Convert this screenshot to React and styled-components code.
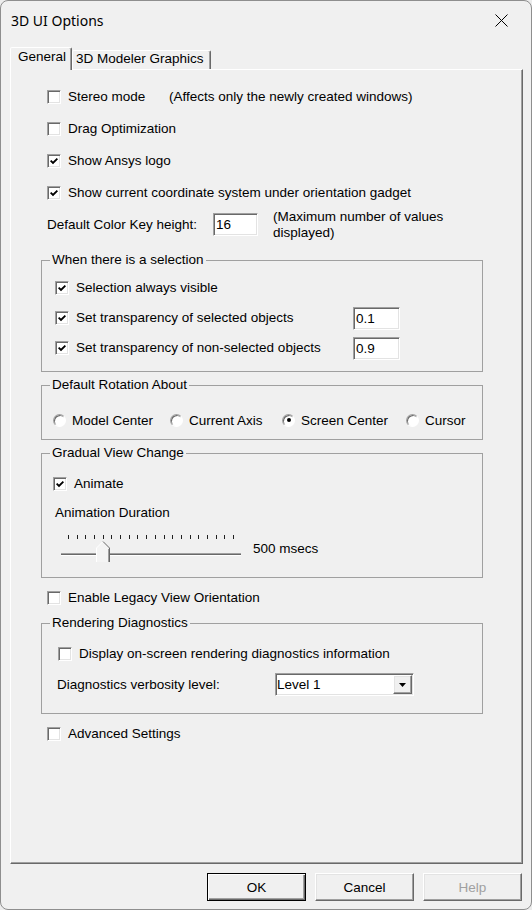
import React from "react";
import styled, { createGlobalStyle, css } from "styled-components";

const GlobalStyle = createGlobalStyle`
  html, body {
    margin: 0;
    padding: 0;
    background: #ececec;
  }
  body {
    font-family: "Liberation Sans", Arial, sans-serif;
    font-size: 13.5px;
    color: #000;
  }
  *, *::before, *::after {
    box-sizing: border-box;
  }
`;

// classic 3D edges
const sunken = css`
  border: 1px solid;
  border-color: #a0a0a0 #fff #fff #a0a0a0;
  box-shadow: inset 1px 1px 0 #696969, inset -1px -1px 0 #e3e3e3;
  background: #fff;
`;

const raised = css`
  border: 1px solid;
  border-color: #fff #696969 #696969 #fff;
  box-shadow: inset -1px -1px 0 #a0a0a0, inset 1px 1px 0 #e3e3e3;
  background: #f0f0f0;
`;

const Window = styled.div`
  width: 532px;
  height: 910px;
  display: flex;
  flex-direction: column;
  background: #f0f0f0;
  border: 1px solid #8e8e8e;
  border-radius: 8px;
  overflow: hidden;
`;

const TitleBar = styled.div`
  flex: none;
  height: 39px;
  display: flex;
  align-items: center;
  justify-content: space-between;
  padding: 0 23px 0 10px;
  font-family: "Noto Sans", "Open Sans", sans-serif;
  font-size: 14px;
`;

const TabStrip = styled.div`
  flex: none;
  height: 29px;
  display: flex;
  align-items: flex-end;
  padding-left: 9px;
`;

const Tab = styled.div`
  position: relative;
  z-index: 1;
  width: ${(p) => p.$w}px;
  height: ${(p) => (p.$active ? 23 : 19)}px;
  margin-bottom: ${(p) => (p.$active ? -1 : 0)}px;
  padding: 0 0 ${(p) => (p.$active ? 4 : 2)}px ${(p) => p.$pl}px;
  display: flex;
  align-items: center;
  line-height: 16px;
  white-space: nowrap;
  background: #f0f0f0;
  border: 1px solid;
  border-bottom: none;
  border-color: #fff #696969 transparent #fff;
  box-shadow: inset -1px 0 0 #a0a0a0;
  border-radius: 2px 2px 0 0;
`;

const Panel = styled.div`
  flex: none;
  height: 795px;
  margin: 0 8px 0 9px;
  padding: 11px 0 0 30px;
  display: flex;
  flex-direction: column;
  align-items: flex-start;
  border: 1px solid;
  border-color: #fff #696969 #696969 #fff;
  box-shadow: inset -1px -1px 0 #a0a0a0;
`;

const CheckRow = styled.div`
  flex: none;
  display: flex;
  align-items: center;
  gap: 7px;
  height: ${(p) => p.$h ?? 32}px;
  margin-top: ${(p) => p.$mt ?? 0}px;
  padding-left: ${(p) => p.$indent ?? 0}px;
`;

const Label = styled.span`
  flex: none;
  width: ${(p) => (p.$w ? `${p.$w}px` : "auto")};
  line-height: 16px;
  white-space: nowrap;
`;

const Box = styled.span`
  flex: none;
  width: 14px;
  height: 14px;
  display: flex;
  align-items: center;
  justify-content: center;
  ${sunken}
`;

const KeyRow = styled.div`
  flex: none;
  display: flex;
  align-items: flex-start;
  height: 43px;
  padding-left: 6px;
`;

const KeyLabel = styled.span`
  width: 166px;
  margin-top: 4px;
  line-height: 23px;
  white-space: nowrap;
`;

const TextBox = styled.div`
  flex: none;
  width: ${(p) => p.$w}px;
  height: 23px;
  margin-top: ${(p) => p.$mt ?? 0}px;
  padding-left: 2px;
  line-height: 21px;
  ${sunken}
`;

const KeyNote = styled.span`
  margin: 0 0 0 15px;
  line-height: 16px;
`;

const Group = styled.fieldset`
  flex: none;
  width: 442px;
  min-width: 0;
  margin: ${(p) => p.$mt ?? 0}px 0 0;
  padding: 0;
  border: 1px solid #a0a0a0;
`;

const Legend = styled.legend`
  margin-left: 8px;
  padding: 0 2px;
  line-height: 16px;
`;

const GroupBody = styled.div`
  padding: ${(p) => p.$pad};
  display: flex;
  flex-direction: column;
`;

const SelRow = styled.div`
  display: grid;
  grid-template-columns: 298px 47px;
  align-items: center;
  height: 30px;
`;

const CheckCell = styled.div`
  display: flex;
  align-items: center;
  gap: 7px;
`;

const RadioRow = styled.div`
  display: grid;
  grid-template-columns: 117px 112px 124px auto;
  align-items: center;
  height: 26px;
`;

const RadioOpt = styled.div`
  display: flex;
  align-items: center;
  gap: 6px;
  white-space: nowrap;
`;

const RadioDot = styled.span`
  flex: none;
  width: 13px;
  height: 13px;
  border-radius: 50%;
  display: flex;
  align-items: center;
  justify-content: center;
  background: #fff;
  border: 1px solid;
  border-color: #a0a0a0 #fff #fff #a0a0a0;
  box-shadow: inset 1px 1px 0 #696969;

  &::after {
    content: "";
    width: 4px;
    height: 4px;
    border-radius: 50%;
    background: ${(p) => (p.$on ? "#000" : "transparent")};
  }
`;

const SubLabel = styled.div`
  height: ${(p) => p.$h}px;
  line-height: ${(p) => p.$h}px;
  margin-left: ${(p) => p.$ml ?? 0}px;
  white-space: nowrap;
`;

const SliderRow = styled.div`
  display: flex;
  align-items: flex-start;
  height: 38px;
`;

const SliderValue = styled.span`
  margin: 13px 0 0 10px;
  line-height: 16px;
`;

const LevelRow = styled.div`
  display: flex;
  align-items: center;
  height: 23px;
  margin-top: 5px;
`;

const Select = styled.div`
  flex: none;
  width: 139px;
  height: 23px;
  display: flex;
  align-items: center;
  justify-content: space-between;
  padding: 0 1px 0 1px;
  ${sunken}
`;

const SelectButton = styled.span`
  flex: none;
  width: 19px;
  height: 19px;
  display: flex;
  align-items: center;
  justify-content: center;
  ${raised}
`;

const ButtonRow = styled.div`
  flex: none;
  height: 45px;
  display: flex;
  justify-content: flex-end;
  align-items: flex-start;
  gap: 9px;
  padding: 9px 9px 0 0;
`;

const Button = styled.div`
  width: 99px;
  height: 28px;
  display: flex;
  align-items: center;
  justify-content: center;
  ${raised}
  color: ${(p) => (p.$disabled ? "#a0a0a0" : "#000")};
  ${(p) =>
    p.$default &&
    css`
      border-color: #000;
      box-shadow: inset 1px 1px 0 #fff, inset -1px -1px 0 #696969,
        inset -2px -2px 0 #a0a0a0;
    `}
`;

function CheckBox({ checked }) {
  return (
    <Box>
      {checked && (
        <svg width="8" height="8" viewBox="0 0 8 8">
          <path d="M0.6 3.6 L3 6 L7.4 1.6" fill="none" stroke="#000" strokeWidth="1.9" />
        </svg>
      )}
    </Box>
  );
}

function CloseIcon() {
  return (
    <svg width="13" height="13" viewBox="0 0 13 13">
      <path d="M0.5 0.5 L12.5 12.5 M12.5 0.5 L0.5 12.5" stroke="#000" strokeWidth="1" fill="none" />
    </svg>
  );
}

function Slider() {
  const ticks = Array.from({ length: 20 }, (_, i) => Math.round(15 + i * 8.684));
  return (
    <svg width="190" height="38" viewBox="0 0 190 38">
      {ticks.map((x) => (
        <rect key={x} x={x} y="7" width="1" height="4" fill="#202020" />
      ))}
      <rect x="8" y="25" width="180" height="1" fill="#a0a0a0" />
      <rect x="8" y="26" width="180" height="1" fill="#696969" />
      <rect x="8" y="27" width="180" height="1" fill="#fff" />
      <polygon points="43,34 43,20 50,13 57,20 57,34" fill="#f4f4f4" />
      <polyline points="43.5,34 43.5,20 50,13.5" stroke="#fff" fill="none" />
      <polyline points="50,13.5 56.5,20 56.5,34" stroke="#696969" fill="none" />
      <line x1="55.5" y1="21" x2="55.5" y2="34" stroke="#a0a0a0" />
    </svg>
  );
}

const selection = [
  { label: "Selection always visible" },
  { label: "Set transparency of selected objects", value: "0.1" },
  { label: "Set transparency of non-selected objects", value: "0.9" },
];

const rotations = [
  { label: "Model Center" },
  { label: "Current Axis" },
  { label: "Screen Center", on: true },
  { label: "Cursor" },
];

export default function App() {
  return (
    <>
      <GlobalStyle />
      <Window>
        <TitleBar>
          <span>3D UI Options</span>
          <CloseIcon />
        </TitleBar>

        <TabStrip>
          <Tab $active $w={62} $pl={7}>General</Tab>
          <Tab $w={139} $pl={3}>3D Modeler Graphics</Tab>
        </TabStrip>

        <Panel>
          <CheckRow $indent={6}>
            <CheckBox />
            <Label $w={94}>Stereo mode</Label>
            <Label>(Affects only the newly created windows)</Label>
          </CheckRow>
          <CheckRow $indent={6}>
            <CheckBox />
            <Label>Drag Optimization</Label>
          </CheckRow>
          <CheckRow $indent={6}>
            <CheckBox checked />
            <Label>Show Ansys logo</Label>
          </CheckRow>
          <CheckRow $indent={6}>
            <CheckBox checked />
            <Label>Show current coordinate system under orientation gadget</Label>
          </CheckRow>

          <KeyRow>
            <KeyLabel>Default Color Key height:</KeyLabel>
            <TextBox $w={45} $mt={4}>16</TextBox>
            <KeyNote>
              (Maximum number of values
              <br />
              displayed)
            </KeyNote>
          </KeyRow>

          <Group>
            <Legend>When there is a selection</Legend>
            <GroupBody $pad="5px 0 8px 13px">
              {selection.map((s) => (
                <SelRow key={s.label}>
                  <CheckCell>
                    <CheckBox checked />
                    <Label>{s.label}</Label>
                  </CheckCell>
                  {s.value && <TextBox $w={47}>{s.value}</TextBox>}
                </SelRow>
              ))}
            </GroupBody>
          </Group>

          <Group $mt={5}>
            <Legend>Default Rotation About</Legend>
            <GroupBody $pad="14px 0 6px 11px">
              <RadioRow>
                {rotations.map((r) => (
                  <RadioOpt key={r.label}>
                    <RadioDot $on={r.on} />
                    <span>{r.label}</span>
                  </RadioOpt>
                ))}
              </RadioRow>
            </GroupBody>
          </Group>

          <Group $mt={5}>
            <Legend>Gradual View Change</Legend>
            <GroupBody $pad="9px 0 11px 11px">
              <CheckRow $h={28}>
                <CheckBox checked />
                <Label>Animate</Label>
              </CheckRow>
              <SubLabel $h={30} $ml={2}>Animation Duration</SubLabel>
              <SliderRow>
                <Slider />
                <SliderValue>500 msecs</SliderValue>
              </SliderRow>
            </GroupBody>
          </Group>

          <CheckRow $indent={6} $h={26} $mt={7}>
            <CheckBox />
            <Label>Enable Legacy View Orientation</Label>
          </CheckRow>

          <Group $mt={4}>
            <Legend>Rendering Diagnostics</Legend>
            <GroupBody $pad="9px 0 17px 15px">
              <CheckRow $h={28} $indent={1}>
                <CheckBox />
                <Label>Display on-screen rendering diagnostics information</Label>
              </CheckRow>
              <LevelRow>
                <Label $w={218}>Diagnostics verbosity level:</Label>
                <Select>
                  <span>Level 1</span>
                  <SelectButton>
                    <svg width="7" height="4" viewBox="0 0 7 4">
                      <polygon points="0,0 7,0 3.5,4" fill="#000" />
                    </svg>
                  </SelectButton>
                </Select>
              </LevelRow>
            </GroupBody>
          </Group>

          <CheckRow $indent={6} $h={26} $mt={7}>
            <CheckBox />
            <Label>Advanced Settings</Label>
          </CheckRow>
        </Panel>

        <ButtonRow>
          <Button $default>OK</Button>
          <Button>Cancel</Button>
          <Button $disabled>Help</Button>
        </ButtonRow>
      </Window>
    </>
  );
}
